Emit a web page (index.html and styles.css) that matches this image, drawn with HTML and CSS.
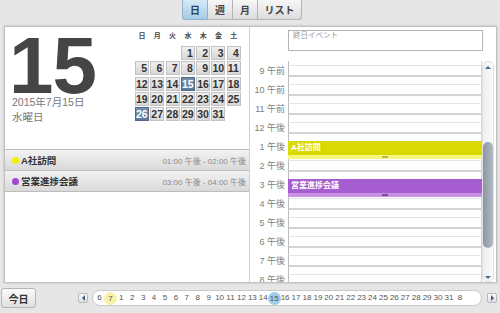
FILE: index.html
```html
<!DOCTYPE html>
<html lang="ja">
<head>
    <meta charset="UTF-8">
    <title>カレンダー</title>
    <link rel="stylesheet" href="styles.css">
</head>
<body>
    <!-- 表示切替 -->
    <div class="tabs">
        <button class="tab active">日</button>
        <button class="tab">週</button>
        <button class="tab">月</button>
        <button class="tab wide">リスト</button>
    </div>

    <div class="panel">
        <!-- 左: 日付と予定一覧 -->
        <div class="day-pane">
            <div class="day-head">
                <div class="big-date">
                    <div class="day-num">15</div>
                    <div class="date-text">2015年7月15日</div>
                    <div class="date-text">水曜日</div>
                </div>
                <div class="mini-cal">
                    <div class="weekdays">
                        <span>日</span><span>月</span><span>火</span><span>水</span><span>木</span><span>金</span><span>土</span>
                    </div>
                    <div class="cells">
                        <span class="blank"></span><span class="blank"></span><span class="blank"></span>
                        <span>1</span><span>2</span><span>3</span><span>4</span>
                        <span>5</span><span>6</span><span>7</span><span>8</span><span>9</span><span>10</span><span>11</span>
                        <span>12</span><span>13</span><span>14</span><span class="sel">15</span><span>16</span><span>17</span><span>18</span>
                        <span>19</span><span>20</span><span>21</span><span>22</span><span>23</span><span>24</span><span>25</span>
                        <span class="sel">26</span><span>27</span><span>28</span><span>29</span><span>30</span><span>31</span>
                    </div>
                </div>
            </div>
            <ul class="events">
                <li class="event-row">
                    <span class="dot yellow"></span>
                    <span class="ev-name">A社訪問</span>
                    <span class="ev-time">01:00 午後 - 02:00 午後</span>
                </li>
                <li class="event-row">
                    <span class="dot purple"></span>
                    <span class="ev-name">営業進捗会議</span>
                    <span class="ev-time">03:00 午後 - 04:00 午後</span>
                </li>
            </ul>
        </div>

        <!-- 右: タイムライン -->
        <div class="time-pane">
            <div class="allday">終日イベント</div>
            <div class="timeline">
                <div class="scroll-area">
                    <div class="hours">
                        <div class="hour"><span class="hour-label"></span><span class="slot"></span></div>
                        <div class="hour"><span class="hour-label">9 午前</span><span class="slot"></span></div>
                        <div class="hour"><span class="hour-label">10 午前</span><span class="slot"></span></div>
                        <div class="hour"><span class="hour-label">11 午前</span><span class="slot"></span></div>
                        <div class="hour"><span class="hour-label">12 午後</span><span class="slot"></span></div>
                        <div class="hour"><span class="hour-label">1 午後</span><span class="slot"></span></div>
                        <div class="hour"><span class="hour-label">2 午後</span><span class="slot"></span></div>
                        <div class="hour"><span class="hour-label">3 午後</span><span class="slot"></span></div>
                        <div class="hour"><span class="hour-label">4 午後</span><span class="slot"></span></div>
                        <div class="hour"><span class="hour-label">5 午後</span><span class="slot"></span></div>
                        <div class="hour"><span class="hour-label">6 午後</span><span class="slot"></span></div>
                        <div class="hour"><span class="hour-label">7 午後</span><span class="slot"></span></div>
                        <div class="hour"><span class="hour-label">8 午後</span><span class="slot"></span></div>
                    </div>
                    <div class="block yellow-block" style="top: 80px">
                        <div class="block-title">A社訪問</div>
                        <div class="block-foot"><span class="grip"></span></div>
                    </div>
                    <div class="block purple-block" style="top: 118px">
                        <div class="block-title">営業進捗会議</div>
                        <div class="block-foot"><span class="grip"></span></div>
                    </div>
                </div>
                <div class="scrollbar">
                    <span class="arrow-up"></span>
                    <span class="thumb"></span>
                    <span class="arrow-down"></span>
                </div>
            </div>
        </div>
    </div>

    <!-- 下部: 今日 と 日付ページャ -->
    <div class="footer">
        <button class="today-btn">今日</button>
        <span class="pager-btn"><span class="tri-left"></span></span>
        <div class="days">
            <span class="d">6</span>
            <span class="d"><span class="mark month">7</span></span>
            <span class="d">1</span><span class="d">2</span><span class="d">3</span><span class="d">4</span><span class="d">5</span>
            <span class="d">6</span><span class="d">7</span><span class="d">8</span><span class="d">9</span><span class="d">10</span>
            <span class="d">11</span><span class="d">12</span><span class="d">13</span><span class="d">14</span>
            <span class="d"><span class="mark current">15</span></span>
            <span class="d">16</span><span class="d">17</span><span class="d">18</span><span class="d">19</span><span class="d">20</span>
            <span class="d">21</span><span class="d">22</span><span class="d">23</span><span class="d">24</span><span class="d">25</span>
            <span class="d">26</span><span class="d">27</span><span class="d">28</span><span class="d">29</span><span class="d">30</span>
            <span class="d">31</span><span class="d">8</span>
        </div>
        <span class="pager-btn"><span class="tri-right"></span></span>
    </div>
</body>
</html>
```

FILE: styles.css
```css
/* 全体 */
* {
    box-sizing: border-box;
}

body {
    margin: 0;
    width: 500px;
    height: 313px;
    overflow: hidden;
    background-color: #e6e6e6;
    font-family: "Liberation Sans", "Noto Sans CJK JP", sans-serif;
    color: #333;
}

/* 表示切替タブ */
.tabs {
    display: flex;
    height: 20px;
    padding-left: 182px;
}

.tab {
    width: 25px;
    height: 20px;
    padding: 0;
    border: 1px solid #b5b5b5;
    border-top: none;
    border-left: none;
    background: linear-gradient(#f7f7f7, #dcdcdc);
    font-family: inherit;
    font-size: 10px;
    font-weight: bold;
    color: #444;
}

.tab:first-child {
    width: 26px;
    border-left: 1px solid #9fb6c8;
    border-bottom-left-radius: 3px;
}

.tab.active {
    background: linear-gradient(#d6eaf7, #a4cbe6);
    border-color: #93b2c8;
    color: #2b4660;
}

.tab.wide {
    width: 44px;
    border-bottom-right-radius: 3px;
}

/* メインパネル */
.panel {
    display: flex;
    height: 257px;
    margin: 6px 3px 0 4px;
    background-color: #fff;
    border: 1px solid #c2c2c2;
    box-shadow: 0 0 2px rgba(0, 0, 0, 0.25);
}

.day-pane {
    width: 245px;
    border-right: 1px solid #d2d2d2;
}

.day-head {
    display: flex;
    height: 122px;
}

.big-date {
    width: 130px;
    padding-left: 4px;
}

.day-num {
    margin-top: 10px;
    height: 58px;
    font-family: "Liberation Sans", Arial, sans-serif;
    font-size: 80px;
    font-weight: bold;
    line-height: 58px;
    color: #454545;
    letter-spacing: -1px;
}

.date-text {
    padding-left: 3px;
    font-size: 10.5px;
    line-height: 15px;
    color: #777;
}

/* ミニカレンダー */
.mini-cal {
    margin-top: 4px;
}

.weekdays {
    display: grid;
    grid-template-columns: repeat(7, 14px);
    column-gap: 1.3px;
    height: 10px;
    margin-bottom: 5px;
    font-size: 7px;
    font-weight: bold;
    line-height: 10px;
    text-align: center;
    color: #444;
}

.cells {
    display: grid;
    grid-template-columns: repeat(7, 14px);
    column-gap: 1.3px;
    row-gap: 1.3px;
}

.cells span {
    height: 14px;
    padding-right: 1px;
    border: 1px solid #c3c3c3;
    background: linear-gradient(#efefef, #d8d8d8);
    font-size: 10.5px;
    font-weight: bold;
    line-height: 12px;
    text-align: right;
    color: #333;
}

.cells span.blank {
    border: none;
    background: none;
}

.cells span.sel {
    border-color: #4f6888;
    background: linear-gradient(#7890ae, #5f7899);
    color: #fff;
}

/* 予定一覧 */
.events {
    margin: 0;
    padding: 0;
    list-style: none;
    border-top: 1px solid #b9b9b9;
}

.event-row {
    display: flex;
    align-items: center;
    height: 21px;
    padding: 0 3px 0 7px;
    border-bottom: 1px solid #bdbdbd;
    background: linear-gradient(#f3f3f3, #d9d9d9);
}

.dot {
    width: 7px;
    height: 7px;
    margin-right: 2px;
    border-radius: 50%;
}

.dot.yellow {
    background-color: #f2f200;
}

.dot.purple {
    background-color: #a246d6;
}

.ev-name {
    flex: 1;
    font-size: 9.5px;
    font-weight: bold;
    color: #333;
}

.ev-time {
    font-size: 8px;
    color: #8a8a8a;
}

/* タイムライン */
.time-pane {
    flex: 1;
    padding-top: 3px;
}

.allday {
    width: 195px;
    height: 21px;
    margin-left: 38px;
    padding: 0 4px;
    border: 1px solid #b4b4b4;
    font-size: 7.5px;
    line-height: 10px;
    color: #999;
}

.timeline {
    display: flex;
    height: 221px;
    margin-top: 10px;
}

.scroll-area {
    position: relative;
    width: 232px;
    overflow: hidden;
}

.hours {
    margin-top: -15px;
}

.hour {
    display: flex;
    height: 19px;
}

.hour-label {
    width: 38px;
    padding-right: 3px;
    font-size: 9px;
    line-height: 12px;
    text-align: right;
    color: #808080;
}

.slot {
    width: 194px;
    border-left: 1px solid #bcbcbc;
    border-right: 1px solid #d4d4d4;
    border-top: 1px solid #e4e4e4;
    background: linear-gradient(#fff 9px, #d3d3d3 9px, #d3d3d3 11px, #fff 11px);
}

.block {
    position: absolute;
    left: 38px;
    width: 194px;
    height: 18px;
}

.block-title {
    height: 14px;
    padding-left: 3px;
    font-size: 8px;
    font-weight: bold;
    line-height: 14px;
    color: #fff;
}

.block-foot {
    display: flex;
    justify-content: center;
    align-items: center;
    height: 4px;
}

.grip {
    width: 6px;
    height: 2px;
}

.yellow-block .block-title {
    background-color: #dada02;
}

.yellow-block .block-foot {
    background-color: #f6f67c;
}

.yellow-block .grip {
    background-color: #b8b860;
}

.purple-block .block-title {
    background-color: #a65dd0;
}

.purple-block .block-foot {
    background-color: #c892e2;
}

.purple-block .grip {
    background-color: #7d4ca0;
}

.scrollbar {
    display: flex;
    flex-direction: column;
    align-items: center;
    width: 12px;
    border: 1px solid #e2e2e2;
    border-radius: 5px;
    background: linear-gradient(to right, #eeeeee, #fbfbfb);
}

.arrow-up {
    margin-top: 4px;
    border-left: 3px solid transparent;
    border-right: 3px solid transparent;
    border-bottom: 3px solid #4b6a8c;
}

.thumb {
    width: 10px;
    height: 106px;
    margin-top: 73px;
    border-radius: 5px;
    background: linear-gradient(to right, #8c96a2, #b2bac4);
}

.arrow-down {
    margin-top: auto;
    margin-bottom: 2px;
    border-left: 3px solid transparent;
    border-right: 3px solid transparent;
    border-top: 3px solid #4b6a8c;
}

/* 下部バー */
.footer {
    display: flex;
    align-items: center;
    height: 30px;
    padding-left: 1px;
}

.today-btn {
    width: 35px;
    height: 20px;
    margin-right: 42px;
    padding: 0;
    border: 1px solid #b5b5b5;
    border-radius: 3px;
    background: linear-gradient(#fbfbfb, #e0e0e0);
    font-family: inherit;
    font-size: 10px;
    font-weight: bold;
    color: #333;
}

.pager-btn {
    display: flex;
    justify-content: center;
    align-items: center;
    width: 10px;
    height: 10px;
    border: 1px solid #b8b8b8;
    border-radius: 2px;
    background: linear-gradient(#fafafa, #dedede);
}

.tri-left {
    border-top: 3px solid transparent;
    border-bottom: 3px solid transparent;
    border-right: 3px solid #3d5a7a;
}

.tri-right {
    border-top: 3px solid transparent;
    border-bottom: 3px solid transparent;
    border-left: 3px solid #3d5a7a;
}

.days {
    display: flex;
    align-items: center;
    width: 390px;
    height: 16px;
    margin: 0 5px 0 4px;
    padding-left: 1px;
    border: 1px solid #cacaca;
    border-radius: 8px;
    background-color: #fff;
}

.d {
    display: flex;
    justify-content: center;
    width: 10.93px;
    font-size: 8px;
    line-height: 12px;
    color: #555;
}

.mark {
    display: block;
    flex: none;
    width: 13px;
    height: 13px;
    border-radius: 50%;
    text-align: center;
    line-height: 13px;
}

.mark.month {
    background-color: #f7f2a6;
}

.mark.current {
    background-color: #9fcde9;
}
```
